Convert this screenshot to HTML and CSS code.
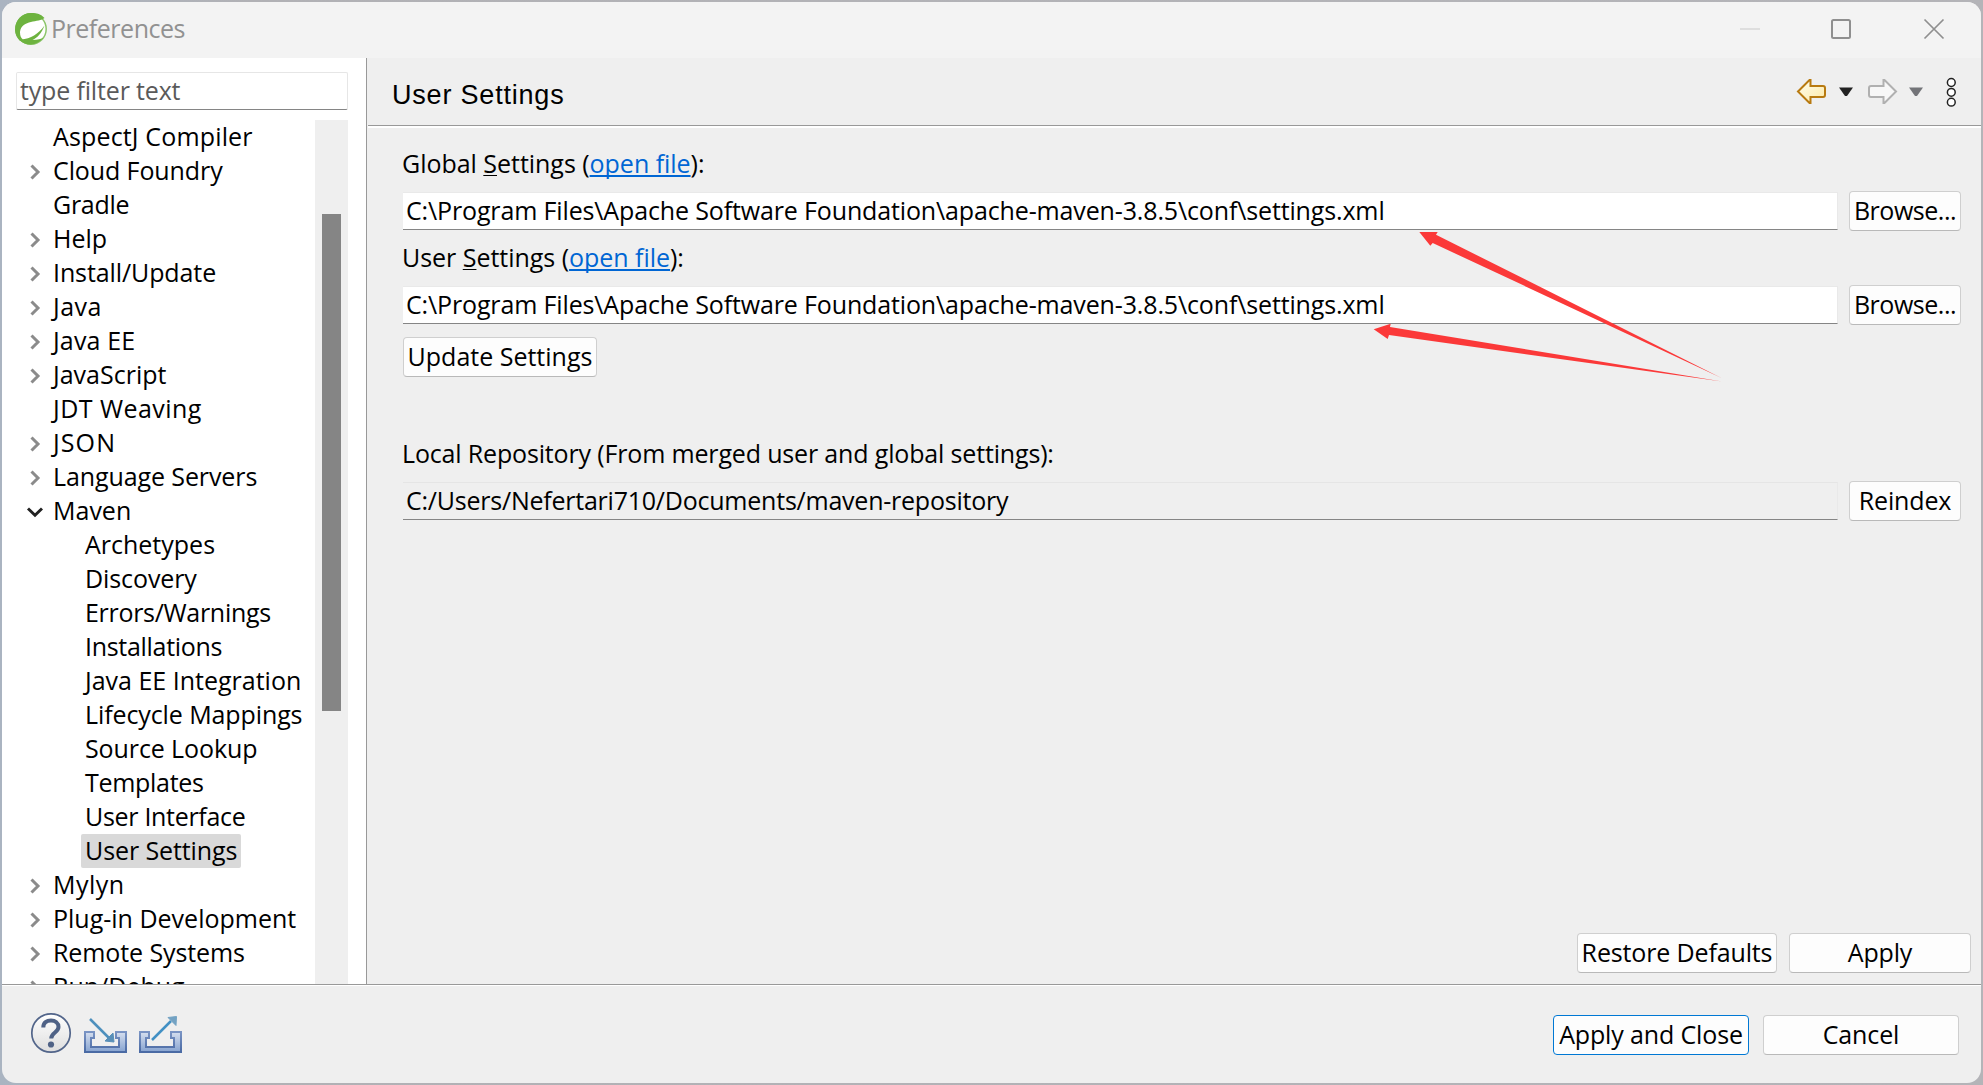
FILE: index.html
```html
<!DOCTYPE html>
<html lang="en">
<head>
<meta charset="utf-8">
<title>Preferences</title>
<link rel="stylesheet" href="styles.css">
</head>
<body>
<svg class="defs" width="0" height="0" aria-hidden="true">
  <symbol id="chev" viewBox="0 0 16 18"><path d="M4.500 2.500 11 9l-6.500 6.500" fill="none" stroke="#8b8b8b" stroke-width="3"/></symbol>
  <symbol id="chev-down" viewBox="0 0 18 18"><path d="M2 5.500 9 12.300 16 5.500" fill="none" stroke="#222" stroke-width="2.900"/></symbol>
  <linearGradient id="tray-fill" x1="0" y1="0" x2="0" y2="1"><stop offset="0" stop-color="#d6dfef"/><stop offset="1" stop-color="#86a3d0"/></linearGradient>
  <linearGradient id="tray-edge" x1="0" y1="0" x2="0" y2="1"><stop offset="0" stop-color="#7a94c4"/><stop offset="1" stop-color="#4a6aa4"/></linearGradient>
  <linearGradient id="gold" x1="0" y1="0" x2="1" y2="1"><stop offset="0" stop-color="#fffef0"/><stop offset="1" stop-color="#fde9a4"/></linearGradient>
  <linearGradient id="help-fill" x1="0" y1="0" x2="0" y2="1"><stop offset="0" stop-color="#fff"/><stop offset="1" stop-color="#dedede"/></linearGradient>
</svg>
<div class="window">
  <header class="titlebar">
    <svg class="logo" width="34" height="34" viewBox="0 0 34 34">
      <circle cx="17" cy="17" r="15.200" fill="#fff" stroke="#8cc56a" stroke-width="1.500"/>
      <path d="M1 18C1 8 8 1 17 1c6 0 10 1 13.500 5C25 11 8 7 6 20c0 4 1 6 3 7.500l-3 1.500C3 26 1 22 1 18Z" fill="#6db33f"/>
      <path d="M7 27.500c10-1 17-5 23.500-14-3 8-7 12-12 14.500 5-.3 9-1 11-2.500-3 4-8 7-13 7-4 0-8-1.500-10.500-4Z" fill="#6db33f"/>
    </svg>
    <h1>Preferences</h1>
    <svg class="controls" width="210" height="24" viewBox="0 0 210 24" fill="none">
      <path d="M3 12h20" stroke="#dedede" stroke-width="2"/>
      <rect x="95" y="3" width="18" height="18" rx="1.500" stroke="#8f8f8f" stroke-width="2"/>
      <path d="m187.500 2.500 19 19m0-19-19 19" stroke="#8f8f8f" stroke-width="1.700"/>
    </svg>
  </header>
  <div class="body">
    <aside class="sidebar">
      <div class="filter">type filter text</div>
      <div class="treewrap">
        <ul class="tree">
          <li class="wide"><i></i><span>AspectJ Compiler</span></li>
          <li class="snug"><svg><use href="#chev"/></svg><span>Cloud Foundry</span></li>
          <li class="tight"><i></i><span>Gradle</span></li>
          <li><svg><use href="#chev"/></svg><span>Help</span></li>
          <li class="snug"><svg><use href="#chev"/></svg><span>Install/Update</span></li>
          <li class="loose"><svg><use href="#chev"/></svg><span>Java</span></li>
          <li class="wide"><svg><use href="#chev"/></svg><span>Java EE</span></li>
          <li><svg><use href="#chev"/></svg><span>JavaScript</span></li>
          <li class="loose"><i></i><span>JDT Weaving</span></li>
          <li class="looser"><svg><use href="#chev"/></svg><span>JSON</span></li>
          <li class="snug"><svg><use href="#chev"/></svg><span>Language Servers</span></li>
          <li><svg class="open"><use href="#chev-down"/></svg><span>Maven</span></li>
          <li class="sub"><span>Archetypes</span></li>
          <li class="sub snug"><span>Discovery</span></li>
          <li class="sub tight"><span>Errors/Warnings</span></li>
          <li class="sub tight"><span>Installations</span></li>
          <li class="sub"><span>Java EE Integration</span></li>
          <li class="sub snug"><span>Lifecycle Mappings</span></li>
          <li class="sub snug"><span>Source Lookup</span></li>
          <li class="sub tight"><span>Templates</span></li>
          <li class="sub tight"><span>User Interface</span></li>
          <li class="sub selected"><span>User Settings</span></li>
          <li class="loose"><svg><use href="#chev"/></svg><span>Mylyn</span></li>
          <li><svg><use href="#chev"/></svg><span>Plug-in Development</span></li>
          <li class="snug"><svg><use href="#chev"/></svg><span>Remote Systems</span></li>
          <li><svg><use href="#chev"/></svg><span>Run/Debug</span></li>
        </ul>
        <div class="scroll"><div class="thumb"></div></div>
      </div>
    </aside>
    <main class="page">
      <div class="pagehead">
        <h2>User Settings</h2>
        <svg width="164" height="36" viewBox="0 0 164 36">
          <path d="M2 17.500 13.500 6h1v6H27q2 0 2 2v7q0 2-2 2H14.500v6h-1Z" fill="url(#gold)" stroke="#b87a10" stroke-width="2"/>
          <path d="M43 13.500h14l-6 8.500h-2Z" fill="#222"/>
          <path d="M100 17.500 88.500 6h-1v6H75q-2 0-2 2v7q0 2 2 2h12.500v6h1Z" fill="#f7f7f7" stroke="#b0b0b0" stroke-width="2"/>
          <path d="M113 13.500h14l-6 8.500h-2Z" fill="#737478"/>
          <g fill="#fff" stroke="#222" stroke-width="1.500"><circle cx="155.300" cy="8.500" r="3.900"/><circle cx="155.300" cy="18.300" r="3.900"/><circle cx="155.300" cy="28.200" r="3.900"/></g>
        </svg>
      </div>
      <div class="form">
        <div class="label even">Global <u>S</u>ettings (<a>open file</a>):</div>
        <div class="row"><div class="field">C:\Program Files\Apache Software Foundation\apache-maven-3.8.5\conf\settings.xml</div><button class="dots">Browse...</button></div>
        <div class="label even">User <u>S</u>ettings (<a>open file</a>):</div>
        <div class="row"><div class="field">C:\Program Files\Apache Software Foundation\apache-maven-3.8.5\conf\settings.xml</div><button class="dots">Browse...</button></div>
        <button class="update">Update Settings</button>
        <div class="label local">Local Repository (From merged user and global settings):</div>
        <div class="row"><div class="field readonly">C:/Users/Nefertari710/Documents/maven-repository</div><button>Reindex</button></div>
      </div>
      <div class="pagebuttons"><button class="restore">Restore Defaults</button><button class="apply">Apply</button></div>
    </main>
  </div>
  <footer class="footer">
    <svg width="156" height="44" viewBox="0 0 156 44">
      <circle cx="21" cy="22" r="19.200" fill="url(#help-fill)" stroke="#52658a" stroke-width="1.700"/>
      <path d="M13.300 16.500c0-5 3.500-7 7.700-7s7.500 2.400 7.500 6.500c0 5.500-7.300 5.500-7.300 11.500" fill="none" stroke="#4f6286" stroke-width="4"/>
      <circle cx="21" cy="33.500" r="3.100" fill="#4f6286"/>
      <path d="M55 21h9v6h-3v9h28v-9h-3v-6h10v20H55Z" fill="url(#tray-fill)" stroke="url(#tray-edge)" stroke-width="2"/>
      <path d="m60 8 19 19" stroke="#4d90bd" stroke-width="2.500"/><path d="m75 30 8-8 1 9Z" fill="#588fb8" stroke="#588fb8"/>
      <path d="M110 21h9v6h-3v9h28v-9h-3v-6h10v20h-41Z" fill="url(#tray-fill)" stroke="url(#tray-edge)" stroke-width="2"/>
      <path d="m122 29 19-19" stroke="#4190c4" stroke-width="2.500"/><path d="m138 6.500 8.500-1-.5 9Z" fill="#73a2c3" stroke="#73a2c3"/>
    </svg>
    <div class="footbuttons"><button class="primary">Apply and Close</button><button class="cancel">Cancel</button></div>
  </footer>
</div>
<svg class="arrows" width="360" height="170" viewBox="1370 220 360 170" fill="#fb3939">
  <path d="M1419.300 232h18.400l-1.700 2.700 285.500 143.300L1432.700 243l-2.400 2.700Z"/>
  <path d="m1373.700 329.300 17-5.500-.7 3.200 332 54.600L1389 335l-1.300 4Z"/>
</svg>
</body>
</html>
```
FILE: styles.css
```css
* { box-sizing: border-box; }
body {
  margin: 0;
  height: 1085px;
  padding: 2px;
  overflow: hidden;
  background: linear-gradient(90deg, #aab4c1 0, #b1b1b5 250px, #b4b4b8 100%);
  font: 25px/34px "Open Sans", "Noto Sans", sans-serif;
  letter-spacing: -0.14px;
  color: #000;
}
.defs, .arrows { position: absolute; }
.arrows { left: 1370px; top: 220px; }
.window {
  height: 1081px;
  display: flex;
  flex-direction: column;
  border-radius: 14px;
  overflow: hidden;
  background: #efefef;
}
.titlebar {
  height: 56px;
  flex: none;
  display: flex;
  align-items: center;
  padding: 0 34px 2px 12px;
  background: #f3f3f3;
}
h1, h2 { margin: 0; font-weight: 400; }
h1 { flex: 1; margin-left: 3px; padding-bottom: 3px; font-size: 25px; letter-spacing: -0.48px; color: #919191; }
.body { height: 926px; flex: none; display: flex; }
.sidebar {
  width: 365px;
  flex: none;
  display: flex;
  flex-direction: column;
  padding: 14px 18px 0 14px;
  background: #fff;
  border-right: 1px solid #999;
}
.filter {
  height: 38px;
  flex: none;
  padding: 0 3px;
  border: 1px solid #e6e6e6;
  border-bottom-color: #858585;
  border-radius: 2px;
  color: #5a5a5a;
  letter-spacing: -0.16px;
}
.treewrap { flex: 1; min-height: 0; margin-top: 10px; display: flex; }
.tree { flex: 1; margin: 0; padding: 0; list-style: none; overflow: hidden; letter-spacing: 0; }
.tree li { height: 34px; display: flex; align-items: center; white-space: nowrap; }
.tree i, .tree svg { width: 16px; height: 18px; flex: none; margin: 1px 10px 0 11px; }
.tree svg.open { width: 18px; margin-left: 10px; }
.tree svg.open + span { margin-left: -1px; }
.tree span { line-height: 33px; padding-bottom: 1px; }
.tree .sub { padding-left: 65px; }
.tree .sub span { padding: 0 4px 1px; }
.tree .snug { letter-spacing: -0.1px; }
.tree .tight { letter-spacing: -0.3px; }
.tree .wide { letter-spacing: 0.15px; }
.tree .loose { letter-spacing: 0.45px; }
.tree .looser { letter-spacing: 1.1px; }
.tree .selected { letter-spacing: -0.1px; }
.tree .selected span { background: #d9d9d9; border-radius: 2px; }
.scroll { width: 33px; flex: none; padding: 94px 7px 0; background: #efefef; }
.thumb { height: 497px; background: #858585; }
.page { flex: 1; min-width: 0; display: flex; flex-direction: column; }
.pagehead {
  height: 70px;
  flex: none;
  display: flex;
  align-items: center;
  justify-content: space-between;
  margin-left: 1px;
  padding: 0 21px 0 24px;
  border-bottom: 2px solid #fff;
  box-shadow: inset 0 -1px #999;
}
.pagehead h2 { font: 27px/34px "Liberation Sans", sans-serif; letter-spacing: 0.8px; padding-top: 5px; }
.form { flex: 1; padding: 19px 20px 0 36px; }
.label { height: 34px; line-height: 32px; margin-left: -1px; white-space: nowrap; letter-spacing: -0.16px; }
.label.even { letter-spacing: -0.03px; }
.label u { text-decoration: underline; text-decoration-thickness: 1px; text-underline-offset: 2px; }
.label a { color: #0066d4; text-decoration: underline; text-decoration-thickness: 2px; text-underline-offset: 2px; text-decoration-skip-ink: none; }
.row { display: flex; gap: 11px; align-items: center; margin: 10px 0; height: 40px; }
.field {
  flex: 1;
  height: 38px;
  padding-left: 3px;
  line-height: 34px;
  background: #fff;
  border: 1px solid #e9e9e9;
  border-bottom-color: #858585;
  border-left: 0;
  white-space: nowrap;
}
.readonly { background: #efefef; letter-spacing: -0.23px; border-top-color: #e5e5e5; }
button {
  width: 112px;
  height: 40px;
  padding: 0 0 2px;
  font: inherit;
  letter-spacing: inherit;
  white-space: nowrap;
  color: #000;
  background: #fdfdfd;
  border: 1px solid #cfcfcf;
  border-bottom-color: #b9b9b9;
  border-radius: 4px;
}
.dots { letter-spacing: -0.48px; }
.update { display: block; width: 194px; margin-top: 12px; letter-spacing: 0; }
.local { margin-top: 60px; }
.pagebuttons { display: flex; justify-content: flex-end; gap: 12px; padding: 0 10px 11px; }
.restore { width: 200px; }
.apply { width: 182px; }
.footer {
  flex: 1;
  display: flex;
  align-items: flex-start;
  justify-content: space-between;
  padding: 26px 22px 0 28px;
  border-top: 1px solid #999;
  box-shadow: inset 0 1px #fff;
}
.footbuttons { display: flex; gap: 14px; padding-top: 4px; }
.footbuttons button { width: 196px; }
.footbuttons .primary { border-color: #0078d4; }
```
